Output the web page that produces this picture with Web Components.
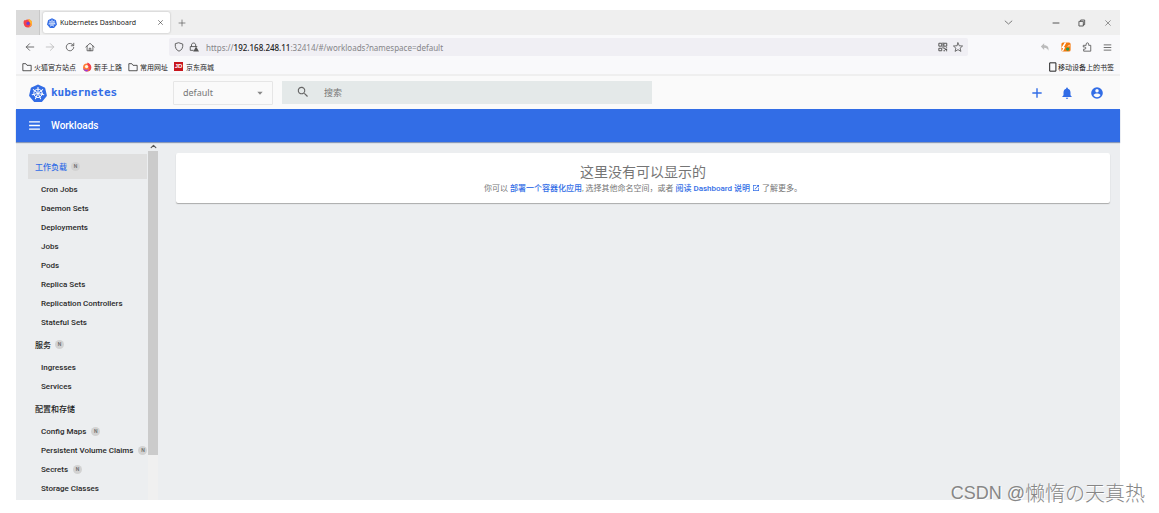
<!DOCTYPE html>
<html lang="zh-CN">
<head>
<meta charset="utf-8">
<title>Kubernetes Dashboard</title>
<style>
  html, body { height: 100%; margin: 0; }
  body {
    box-sizing: border-box; padding: 10px 39px 13px 16px; background: #fff;
    font-family: Roboto, "Noto Sans CJK SC", sans-serif; font-size: 8px;
    display: flex; flex-direction: column; position: relative; overflow: hidden;
  }
</style>
</head>
<body>
<browser-tabs></browser-tabs>
<browser-nav></browser-nav>
<browser-bookmarks></browser-bookmarks>
<kd-header></kd-header>
<kd-toolbar>Workloads</kd-toolbar>
<kd-workspace>
  <kd-sidebar slot="side">
    <kd-group label="工作负载" badge active>
      <kd-item>Cron Jobs</kd-item>
      <kd-item>Daemon Sets</kd-item>
      <kd-item>Deployments</kd-item>
      <kd-item>Jobs</kd-item>
      <kd-item>Pods</kd-item>
      <kd-item>Replica Sets</kd-item>
      <kd-item>Replication Controllers</kd-item>
      <kd-item>Stateful Sets</kd-item>
    </kd-group>
    <kd-group label="服务" badge>
      <kd-item>Ingresses</kd-item>
      <kd-item>Services</kd-item>
    </kd-group>
    <kd-group label="配置和存储">
      <kd-item badge>Config Maps</kd-item>
      <kd-item badge>Persistent Volume Claims</kd-item>
      <kd-item badge>Secrets</kd-item>
      <kd-item>Storage Classes</kd-item>
    </kd-group>
  </kd-sidebar>
  <kd-empty-card></kd-empty-card>
</kd-workspace>
<page-watermark></page-watermark>

<script>
const wheelSpokes = Array.from({ length: 7 }, (_, i) =>
  `<path d="M12 10V4" transform="rotate(${i * 360 / 7} 12 12)"/>`).join('');
const line = (body, w = 1.8) =>
  `<g fill="none" stroke="currentColor" stroke-width="${w}" stroke-linecap="round" stroke-linejoin="round">${body}</g>`;
const fill = body => `<g fill="currentColor">${body}</g>`;
const ICONS = {
  firefox: `<circle cx="12" cy="13" r="9.500" fill="#f5414b"/><path d="M12 3c7-1 11 5 9.500 12-1 4-4 7-8 7 5-3 6-7 3-11-1-3-4-4-4-8z" fill="#ffb52e"/><path d="M3 5l4 3h5l-2 4c-2 0-3 2-2 4 2 3 6 2 8 0-1 5-6 7-10 4-5-3-6-10-3-15z" fill="#f5414b"/><circle cx="12" cy="13" r="4" fill="#6b3fd4"/>`,
  kube: `<path d="M12 .5l8.800 4.200a1.500 1.500 0 0 1 .8 1l2.200 9.400a1.500 1.500 0 0 1-.3 1.300l-6.100 7.100a1.500 1.500 0 0 1-1.200.5H7.800a1.500 1.500 0 0 1-1.200-.5L.5 16.400a1.500 1.500 0 0 1-.3-1.300l2.200-9.400a1.500 1.500 0 0 1 .8-1z" fill="#326ce5"/><g fill="none" stroke="#fff" stroke-width="1.300" stroke-linecap="round"><circle cx="12" cy="12.500" r="5.600"/><g transform="translate(0 .5)">${wheelSpokes}</g></g><circle cx="12" cy="12.500" r="1.400" fill="#fff"/>`,
  close: line('<path d="M5 5l14 14M19 5L5 19"/>'),
  plus: line('<path d="M12 3v18M3 12h18"/>', 2),
  add: fill('<path d="M20 13.200h-6.800V20h-2.400v-6.800H4v-2.400h6.800V4h2.400v6.800H20z"/>'),
  chevron: line('<path d="M3 8l9 8 9-8"/>', 2),
  min: line('<path d="M3 12h18"/>', 3),
  restore: line('<path d="M4 7h12v14H4zM8 7V3h12v14h-4"/>', 2.8),
  back: line('<path d="M21 12H3M11 4l-8 8 8 8"/>', 2),
  forward: line('<path d="M3 12h18M13 4l8 8-8 8"/>', 2),
  reload: line('<path d="M20 8a9 9 0 1 0 1 5M21 3v6h-6"/>', 2),
  home: line('<path d="M2 12L12 3l10 9M5 10v11h14V10M10 21v-6h4v6"/>', 2),
  shield: line('<path d="M12 2l9 3c1 9-3 15-9 17C6 20 2 14 3 5z"/>', 2.2),
  lock: line('<path d="M10 20H3V11h16M6 11V7c0-6 10-6 10 0v4"/>', 2.2) + fill('<path d="M17 11l7 12H10z"/>'),
  qr: line('<path d="M3 3h6v7H3zM15 3h6v7h-6zM3 15h6v6H3zM12 2v4M12 9v5M14 15h3v3h4M14 21h2M20 21h1M20 14h1"/>', 2.4),
  star: line('<path d="M12 2l3 7 8 .6-6 5.200 2 7.700-7-4.200-7 4.200 2-7.700-6-5.200L9 9z"/>', 2),
  undo: fill('<path d="M10 3v5c8 0 12 5 10 13-2-5-5-7-10-7v5L2 11z"/>'),
  addon: `<rect x="1" y="1" width="22" height="22" rx="4" fill="#f4780c"/><path d="M1 14L9 1h4L7 12l3 1-5 9H2l3-7z" fill="#fff"/><path d="M14 11l7-5v5z" fill="#ffd9b0"/><circle cx="16" cy="17" r="4" fill="#279b4c"/>`,
  puzzle: line('<path d="M4 8h6V5c0-4 6-4 6 0v3h5v14H4v-5h3c3 0 3-5 0-5H4z"/>', 2),
  menu: line('<path d="M3 5h18M3 12h18M3 19h18"/>', 2.2),
  bars: fill('<path d="M2 17.500h20V20H2zM2 10.800h20v2.400H2zM2 4h20v2.500H2z"/>'),
  folder: line('<path d="M2 20V4h7l3 4h10v12z"/>', 1.8),
  flame: `<circle cx="12" cy="13" r="9.500" fill="#ff7b35"/><path d="M13 1c5 2 10 6 9.500 13C22 20 17 23 12 22.500c5-2 7-6 4-10-2-3-4-6-3-11.500z" fill="#f5404a"/><path d="M3 15c4 4 9 5 13 2-1 4-3 6-6 5.500C6 22 3 19 3 15z" fill="#9b3ad8"/><circle cx="11" cy="11" r="4" fill="#fff3df"/>`,
  phone: line('<path d="M5 2h14v20H5z"/>', 2.4),
  search: fill('<path d="M15.500 14h-.8l-.3-.3A6.500 6.500 0 1 0 13.700 14.400l.3.300v.8l5 5 1.500-1.500zm-6 0a4.500 4.500 0 1 1 0-9 4.500 4.500 0 0 1 0 9z"/>'),
  caret: fill('<path d="M4 8h16l-8 9z"/>'),
  bell: fill('<path d="M12 22a2 2 0 0 0 2-2h-4a2 2 0 0 0 2 2zm6-6v-5c0-3.100-1.600-5.600-4.500-6.300V4a1.500 1.500 0 0 0-3 0v.7C7.600 5.400 6 7.900 6 11v5l-2 2v1h16v-1z"/>'),
  account: fill('<path fill-rule="evenodd" d="M12 2a10 10 0 1 0 0 20 10 10 0 0 0 0-20zm0 3a3 3 0 1 1 0 6 3 3 0 0 1 0-6zm0 14.200a7.200 7.200 0 0 1-6-3.200c0-2 4-3.100 6-3.100s6 1.100 6 3.100a7.200 7.200 0 0 1-6 3.200z"/>'),
  up: line('<path d="M4 16l8-8 8 8"/>', 4),
  open: fill('<path d="M19 19H5V5h7V3H3v18h18v-9h-2zM14 3v2h3.600l-9.800 9.800 1.400 1.400L19 6.400V10h2V3z"/>')
};

function define(name, html) {
  customElements.define(name, class extends HTMLElement {
    constructor() {
      super();
      const t = document.createElement('template');
      t.innerHTML = html;
      this.attachShadow({ mode: 'open' }).append(t.content.cloneNode(true));
    }
    connectedCallback() {
      const label = this.shadowRoot.querySelector('[data-label]');
      if (label) label.textContent = this.getAttribute('label');
    }
  });
}

customElements.define('ui-icon', class extends HTMLElement {
  connectedCallback() {
    if (this.shadowRoot) return;
    this.attachShadow({ mode: 'open' }).innerHTML = `
      <style>:host{display:block;flex:none;width:var(--icon,10px);height:var(--icon,10px)} svg{display:block;width:100%;height:100%}</style>
      <svg viewBox="0 0 24 24" aria-hidden="true">${ICONS[this.getAttribute('name')]}</svg>`;
  }
});

const RESET = `
  :host,*{box-sizing:border-box}
  button{font:inherit;color:inherit;background:none;border:0;padding:0;margin:0;display:flex;align-items:center;justify-content:center}
  a{color:inherit;text-decoration:none}`;

define('browser-tabs', `
  <style>${RESET}
    :host{display:flex;flex:none;height:25px;background:#efefef;color:#555;align-items:center;font-size:7px;font-family:"Noto Sans",sans-serif}
    .pin{width:24px;height:25px;background:#dadada;border-right:1px solid #c8c8c8}
    .tab{display:flex;align-items:center;gap:3px;width:127px;height:21px;margin-left:3px;padding:0 6px 0 4px;background:#fff;border-radius:2px;box-shadow:0 0 2px #aaa;color:#222}
    .tab .name{flex:1;white-space:nowrap}
    .new{--icon:8px;margin-left:8px}
    .win{display:flex;margin-left:auto;align-items:center;gap:18px;padding-right:8px;--icon:8px}
    .list{--icon:9px;margin-right:21px}
    .x{--icon:7px}
  </style>
  <button class="pin" aria-label="Firefox"><ui-icon name="firefox"></ui-icon></button>
  <div class="tab"><ui-icon name="kube"></ui-icon><span class="name">Kubernetes Dashboard</span><button class="x" aria-label="关闭标签页"><ui-icon name="close"></ui-icon></button></div>
  <button class="new" aria-label="新建标签页"><ui-icon name="plus"></ui-icon></button>
  <div class="win">
    <button class="list" aria-label="列出标签页"><ui-icon name="chevron"></ui-icon></button>
    <button aria-label="最小化"><ui-icon name="min"></ui-icon></button>
    <button aria-label="还原"><ui-icon name="restore"></ui-icon></button>
    <button aria-label="关闭"><ui-icon name="close"></ui-icon></button>
  </div>`);

define('browser-nav', `
  <style>${RESET}
    :host{display:flex;flex:none;height:24px;background:#f9f9fb;color:#555;align-items:center;padding:0 8px 0 9px}
    .keys{display:flex;gap:10px;width:144px;flex:none}
    .off{color:#bbb}
    .url{display:flex;align-items:center;gap:5px;flex:1;height:18px;padding:0 5px;background:#f0eff4;border-radius:2px;max-width:799px}
    .text{flex:1;font:8px "Noto Sans",sans-serif;color:#858588;white-space:nowrap;margin-left:2px;outline:0}
    b{font-weight:500;color:#222}
    .tools{display:flex;gap:11px;margin-left:auto}
    .tools .last{--icon:9px}
  </style>
  <div class="keys">
    <button aria-label="后退"><ui-icon name="back"></ui-icon></button>
    <button class="off" aria-label="前进"><ui-icon name="forward"></ui-icon></button>
    <button aria-label="刷新"><ui-icon name="reload"></ui-icon></button>
    <button aria-label="主页"><ui-icon name="home"></ui-icon></button>
  </div>
  <div class="url">
    <ui-icon name="shield"></ui-icon><ui-icon name="lock"></ui-icon>
    <div class="text" role="textbox" contenteditable="true" spellcheck="false" aria-label="地址">https://<b>192.168.248.11</b>:32414/#/workloads?namespace=default</div>
    <button aria-label="二维码"><ui-icon name="qr"></ui-icon></button>
    <button aria-label="收藏"><ui-icon name="star"></ui-icon></button>
  </div>
  <div class="tools">
    <button class="off" aria-label="撤销"><ui-icon name="undo"></ui-icon></button>
    <button aria-label="附加组件"><ui-icon name="addon"></ui-icon></button>
    <button aria-label="扩展"><ui-icon name="puzzle"></ui-icon></button>
    <button class="last" aria-label="菜单"><ui-icon name="menu"></ui-icon></button>
  </div>`);

define('browser-bookmarks', `
  <style>${RESET}
    :host{display:flex;flex:none;height:17px;background:#f9f9fb;border-bottom:2px solid #efefef;color:#222;align-items:center;gap:6px;padding:0 6px;font-size:7px;font-family:"Noto Sans CJK SC",sans-serif}
    a{display:flex;align-items:center;gap:2px;white-space:nowrap}
    .jd{width:9px;height:9px;background:#c8161d;color:#fff;font:bold 6px/9px "Liberation Sans",sans-serif;text-align:center;margin-right:1px}
    .mobile{margin-left:auto;gap:0}
  </style>
  <a href="#"><ui-icon name="folder"></ui-icon>火狐官方站点</a>
  <a href="#"><ui-icon name="flame"></ui-icon>新手上路</a>
  <a href="#"><ui-icon name="folder"></ui-icon>常用网址</a>
  <a href="#"><span class="jd">JD</span>京东商城</a>
  <a href="#" class="mobile"><ui-icon name="phone"></ui-icon>移动设备上的书签</a>`);

define('kd-header', `
  <style>${RESET}
    :host{display:flex;flex:none;height:33px;background:#fafafa;align-items:center;padding:0 16px 0 13px;color:#326de6}
    .logo{display:flex;align-items:center;gap:4px;width:144px;flex:none;font:bold 11px "DejaVu Sans Mono",monospace}
    .logo ui-icon{--icon:18px}
    .ns{position:relative;width:100px;flex:none;color:#888}
    select{appearance:none;width:100%;height:24px;border:1px solid #e6e6e6;background:#fafafa;color:#777;font:9px "Noto Sans",sans-serif;padding:0 9px;display:block;border-radius:1px}
    .ns ui-icon{position:absolute;right:9px;top:8px;--icon:8px;pointer-events:none}
    .search{display:flex;align-items:center;gap:14px;width:370px;height:23px;margin-left:9px;padding:0 14px;background:#e4e9e9;color:#666}
    .search ui-icon{--icon:14px;margin-bottom:2px}
    input{flex:1;min-width:0;border:0;background:none;outline:0;padding:0;font:9px "Noto Sans CJK SC",sans-serif;color:#555}
    input::placeholder{color:#777;opacity:1}
    .actions{display:flex;gap:16px;margin-left:auto;--icon:14px}
  </style>
  <a class="logo" href="#"><ui-icon name="kube"></ui-icon>kubernetes</a>
  <div class="ns"><select aria-label="命名空间"><option>default</option></select><ui-icon name="caret"></ui-icon></div>
  <label class="search"><ui-icon name="search"></ui-icon><input type="text" placeholder="搜索" aria-label="搜索"></label>
  <div class="actions">
    <button aria-label="新建"><ui-icon name="add"></ui-icon></button>
    <button aria-label="通知"><ui-icon name="bell"></ui-icon></button>
    <button aria-label="用户"><ui-icon name="account"></ui-icon></button>
  </div>`);

define('kd-toolbar', `
  <style>${RESET}
    :host{display:flex;flex:none;height:33px;background:#326de6;color:#fff;align-items:center;gap:10px;padding:0 12px;font-size:10px;font-weight:500;box-shadow:0 1px 1px #8a99b8;position:relative}
    button{--icon:13px}
  </style>
  <button aria-label="切换导航"><ui-icon name="bars"></ui-icon></button><slot></slot>`);

define('kd-workspace', `
  <style>${RESET}
    :host{display:flex;flex:1;min-height:0;background:#eceef0;overflow:hidden}
    main{flex:1;padding:11px 10px 0 18px}
  </style>
  <slot name="side"></slot><main><slot></slot></main>`);

define('kd-sidebar', `
  <style>${RESET}
    :host{display:flex;width:142px;flex:none;overflow:hidden}
    nav{flex:1;min-width:0;padding:12px 1px 0 12px}
    .bar{width:10px;flex:none;background:#f0f0f0;display:flex;flex-direction:column}
    .bar button{height:9px;flex:none;background:#eceef0;color:#555;--icon:7px}
    .thumb{height:85%;background:#cbcbcb}
  </style>
  <nav><slot></slot></nav>
  <div class="bar"><button aria-label="向上滚动"><ui-icon name="up"></ui-icon></button><div class="thumb"></div></div>`);

const BADGE = `.badge{display:none;width:9px;height:9px;border-radius:50%;background:#d2d2d2;color:#666;font:500 5px/9px Roboto,sans-serif;text-align:center;flex:none}
  :host([badge]) .badge{display:block}`;

define('kd-group', `
  <style>${RESET}${BADGE}
    :host{display:block}
    .head{display:flex;align-items:center;gap:4px;height:25px;margin-bottom:1px;padding:0 7px;color:#222;font-size:8px;font-weight:500;white-space:nowrap}
    :host([active]) .head{background:#dfdfdf;color:#326de6}
  </style>
  <a class="head" href="#"><span data-label></span><span class="badge">N</span></a>
  <slot></slot>`);

define('kd-item', `
  <style>${RESET}${BADGE}
    :host{display:block}
    a{display:flex;align-items:center;gap:5px;height:19px;padding-left:13px;color:#2a2a2a;font-size:8px;font-weight:500;white-space:nowrap}
  </style>
  <a href="#"><slot></slot><span class="badge">N</span></a>`);

define('kd-empty-card', `
  <style>${RESET}
    :host{display:block;background:#fff;border-radius:2px;box-shadow:0 1px 1px #aaa;padding:9px 10px 7px;text-align:center;color:#757575}
    h1{margin:0;font-size:14px;line-height:20px;font-weight:400}
    p{margin:0;font-size:8px;line-height:14px}
    a{color:#326de6;font-weight:500}
    a ui-icon{display:inline-block;--icon:8px;vertical-align:-1px}
  </style>
  <h1>这里没有可以显示的</h1>
  <p>你可以 <a href="#">部署一个容器化应用</a>, 选择其他命名空间，或者 <a href="#">阅读 Dashboard 说明 <ui-icon name="open"></ui-icon></a> 了解更多。</p>`);

define('page-watermark', `
  <style>
    :host{position:absolute;right:14px;bottom:6px;display:flex;align-items:center;white-space:nowrap;font:18px/28px "Liberation Sans",sans-serif;color:#868686;text-shadow:1px 1px 0 #fff}
    .cjk{font-family:"Noto Sans CJK SC",sans-serif;font-size:20px;font-weight:300}
  </style>
  <span>CSDN @</span><span class="cjk">懒惰の天真热</span>`);
</script>
</body>
</html>
